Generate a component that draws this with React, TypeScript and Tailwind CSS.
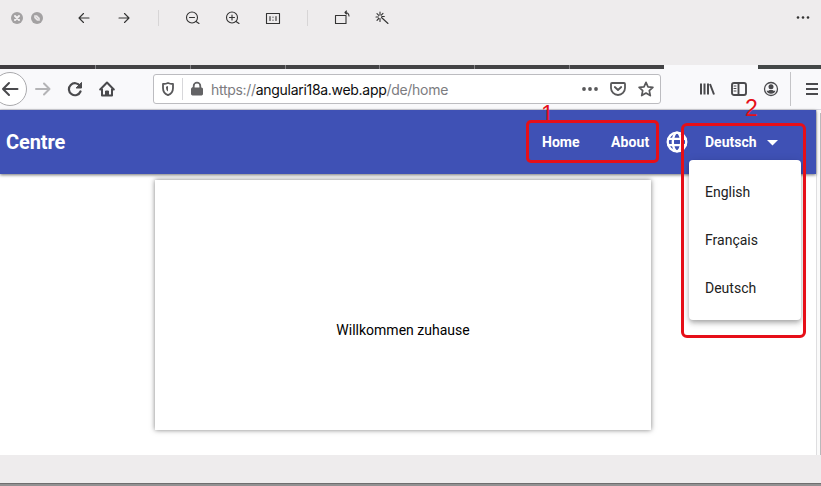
import type { ReactNode } from "react";

function Icon({ className = "", children, w = 16, h = 16, sw = 1.2 }: { className?: string; children: ReactNode; w?: number; h?: number; sw?: number }) {
  return (
    <svg width={w} height={h} viewBox={`0 0 ${w} ${h}`} fill="none" stroke="currentColor" strokeWidth={sw} strokeLinecap="round" strokeLinejoin="round" className={`block shrink-0 ${className}`}>
      {children}
    </svg>
  );
}

function ViewerBar() {
  return (
    <header className="h-[65px] bg-[#eeeced] text-[#333]">
      <div className="flex h-9 items-center pl-[11px] pr-[10px]">
        <Icon w={12} h={12} sw={2}>
          <circle cx="6" cy="6" r="6" fill="#a3a1a2" stroke="none" />
          <path d="M4 4l4 4M8 4l-4 4" stroke="#f2f0f1" />
        </Icon>
        <Icon w={12} h={12} className="ml-2">
          <circle cx="6" cy="6" r="6" fill="#a3a1a2" stroke="none" />
          <path d="M3.200 3.200h2.800L8.800 6v2.800H6L3.200 6z" fill="#e8e6e7" stroke="none" />
          <path d="M5 5l2 2" stroke="#c4c2c3" strokeWidth=".8" />
        </Icon>
        <Icon className="ml-[33px]" sw={1.1}><path d="M13 8H3M7.500 3.500L3 8l4.500 4.500" /></Icon>
        <Icon className="ml-6" sw={1.1}><path d="M3 8h10M8.500 3.500L13 8l-4.500 4.500" /></Icon>
        <div className="ml-[26px] h-4 w-px bg-[#d7d5d6]" />
        <Icon className="ml-[26px]" sw={1.1}><circle cx="7" cy="7.500" r="5.500" /><path d="M4.500 7.500h5M11 11.500L14 13.500" /></Icon>
        <Icon className="ml-6" sw={1.1}><circle cx="7" cy="7.500" r="5.500" /><path d="M4.500 7.500h5M7 5v5M11 11.500L14 13.500" /></Icon>
        <Icon className="ml-6" sw={1.1}><path d="M1.500 3.500h13v10h-13zM5 6.500v4M11 6.500v4M8 7v.3M8 10v.3" /></Icon>
        <div className="ml-[26px] h-4 w-px bg-[#d7d5d6]" />
        <Icon className="ml-[26px]" sw={1.1}><path d="M1.500 5.500h10.500v8H1.500zM11 2.500c2.500 0 3.800 1 4 3.500M12.500 1L11 2.500l1.500 1.500" /></Icon>
        <Icon className="ml-6" sw={1.1}><path d="M7.500 7.500l6.500 6M6 2v3M6 8.500v3M2 7h2.500M7.800 6.500h2.500M3 3.700l1.800 1.600M9 3.300L7.300 5.200M3 10.300L4.700 8.500" /></Icon>
        <Icon className="ml-auto"><g fill="currentColor" stroke="none"><circle cx="3" cy="7.500" r="1.300" /><circle cx="8" cy="7.500" r="1.300" /><circle cx="13" cy="7.500" r="1.300" /></g></Icon>
      </div>
    </header>
  );
}

function TabStrip() {
  return (
    <div className="flex h-1 bg-[#f9f9fb]">
      <div className="w-[95px] bg-[#3f3d40]" />
      {[0, 1, 2, 3, 4].map((n) => (
        <div key={n} className="w-[94.8px] border-l border-[#858487] bg-[#434345]" />
      ))}
      <div className="w-[95px] border-l border-[#858487] bg-[#434345]" />
      <div className="w-[94px]" />
      <div className="flex-1 bg-[#434747]" />
    </div>
  );
}

function BrowserBar() {
  return (
    <nav className="flex h-[41px] items-center overflow-hidden border-b border-[#d9d9df] bg-[#f9f9fb] text-[#4a4a4d]">
      <div className="-ml-[7px] flex size-[34px] shrink-0 items-center justify-center rounded-full border border-[#aaaaad] bg-white">
        <Icon w={18} sw={2}><path d="M16.500 8H2M8 2L2 8l6 6" /></Icon>
      </div>
      <Icon className="ml-2 text-[#b4b4b6]" sw={2}><path d="M1 8h13.500M9 2.500L14.500 8 9 13.500" /></Icon>
      <Icon className="ml-4" sw={2.200}><path d="M13.500 10.500A6 6 0 1 1 13 5" /><path d="M14.500 1.800v5.200H9.500z" fill="currentColor" strokeWidth="1" /></Icon>
      <Icon className="ml-4" sw={2}><path d="M1.200 8.500L8 1.500l6.800 7M3 8v6.500h10V8" /><path d="M6.500 14v-4h3v4z" fill="currentColor" strokeWidth="1" /></Icon>
      <div className="ml-[38px] flex h-[30px] w-[508px] shrink-0 items-center rounded-[3px] border border-[#bcbcc0] bg-white pl-[6px] pr-[6px]">
        <Icon sw={1.800} className="text-[#58585a]"><path d="M8 2c1.800.9 3.500 1 5 1v4c0 4-2 6-5 7.200C5 13 3 11 3 7V3c1.500 0 3.200-.1 5-1z" /><path d="M8 5v5.500C6.500 9.500 6 8 6 5.700z" fill="currentColor" stroke="none" /></Icon>
        <div className="ml-[6px] h-[22px] w-px bg-[#d7d7da]" />
        <Icon className="ml-[6px] text-[#636365]" sw={1.800}><path d="M4.700 7V5a3.300 3.300 0 0 1 6.600 0v2" /><rect x="2.500" y="7" width="11" height="7" rx=".8" fill="currentColor" strokeWidth="1" /></Icon>
        <div className="ml-[6px] whitespace-nowrap pt-[2px] font-['Inter',sans-serif] text-[14px] leading-5 tracking-[-0.3px] text-[#7c7c7f]">
          https://<span className="text-[#0c0c0d]">angulari18a.web.app</span>/de/home
        </div>
        <Icon className="ml-auto text-[#58585a]"><g fill="currentColor" stroke="none"><circle cx="2" cy="8" r="1.900" /><circle cx="8" cy="8" r="1.900" /><circle cx="14" cy="8" r="1.900" /></g></Icon>
        <Icon className="ml-3 text-[#58585a]" sw={1.800}><path d="M2 2h12q1 0 1 1v4a7 7 0 0 1-14 0V3q0-1 1-1zM4.800 6L8 9l3.200-3" /></Icon>
        <Icon className="ml-3 text-[#58585a]" sw={1.700}><path d="M8 1.300l2 4.500 4.900.5-3.600 3.400 1 4.900L8 12l-4.300 2.600 1-4.900L1.100 6.300 6 5.800z" /></Icon>
      </div>
      <Icon className="ml-[38px]" sw={2}><path d="M2 2.500v11M5.500 2.500v11M9 2.500v11M11 3l4 10.500" strokeLinecap="butt" /></Icon>
      <Icon className="ml-4" sw={1.900}><rect x="1" y="2" width="14" height="12" rx="2" /><path d="M7.500 2v12" /><path d="M3 5h2M3 7.500h2M3 10h2" strokeWidth="1" /></Icon>
      <Icon className="ml-4" sw={1.300}><circle cx="8" cy="8" r="6.500" /><circle cx="8" cy="5.800" r="2.500" fill="currentColor" stroke="none" /><path d="M3.500 9.800h2l1-.8h3l1 .8h2q-1 3-4.500 3t-4.500-3z" fill="currentColor" stroke="none" /></Icon>
      <div className="ml-[11px] h-[34px] w-px shrink-0 bg-[#c4c4c7]" />
      <Icon className="ml-[14px]" w={14} sw={2}><path d="M1 3h12M1 8h12M1 13h12" strokeLinecap="butt" /></Icon>
    </nav>
  );
}

function LanguageMenu() {
  return (
    <div className="absolute left-[689px] top-[50px] flex w-28 flex-col rounded bg-white py-2 text-[14px] text-[#212121] shadow-[0_2px_4px_-1px_rgba(0,0,0,.2),0_4px_5px_rgba(0,0,0,.14),0_1px_10px_rgba(0,0,0,.12)]">
      {["English", "Français", "Deutsch"].map((lang) => (
        <div key={lang} className="flex h-12 items-center px-4">{lang}</div>
      ))}
    </div>
  );
}

function WebPage() {
  return (
    <div className="relative flex h-[345px] bg-white font-['Roboto',sans-serif]">
      <main className="w-[816px]">
        <div className="relative flex h-16 items-center bg-[#3f51b5] text-white shadow-[0_1px_3px_rgba(0,0,0,.55)]">
          <div className="ml-[6px] w-[536px] text-[20px] font-bold tracking-[-0.1px]">Centre</div>
          <div className="w-[69px] text-[14px] font-bold">Home</div>
          <div className="w-[55px] text-[14px] font-bold tracking-[0.1px]">About</div>
          <Icon w={22} h={22} sw={2.300}>
            <circle cx="11" cy="11" r="9.300" />
            <ellipse cx="11" cy="11" rx="4.200" ry="9.300" />
            <path d="M2.500 7.800h17M2.500 14.200h17" />
          </Icon>
          <div className="ml-[17px] w-[62px] text-[14px] font-bold">Deutsch</div>
          <svg width="11" height="6" viewBox="0 0 11 6" className="mt-0.5"><path d="M0 0h11L5.500 5.500z" fill="white" /></svg>
        </div>
        <section className="ml-[155px] mt-[6px] flex h-[250px] w-[496px] items-center justify-center bg-white pt-[50px] text-[14px] text-black shadow-[0_0_5px_rgba(0,0,0,.5)]">
          <span>Willkommen zuhause</span>
        </section>
      </main>
      <aside className="flex w-[5px] justify-end border-l border-[#dedee0] bg-[#fafafa] pt-[3px]">
        <div className="w-px bg-[#b9b9bb]" />
      </aside>
      <LanguageMenu />
    </div>
  );
}

function Annotations() {
  return (
    <div className="pointer-events-none absolute inset-0 font-['Liberation_Sans',Arial,sans-serif] text-[23px] leading-none text-[#e60f18]">
      <div className="absolute left-[526px] top-[120px] h-[43px] w-[133px] rounded-[5px] border-3 border-current" />
      <div className="absolute left-[681px] top-[123px] h-[215px] w-[125px] rounded-[6px] border-3 border-current" />
      <span className="absolute left-[541px] top-[103px]">1</span>
      <span className="absolute left-[745px] top-[97px]">2</span>
    </div>
  );
}

export default function App() {
  return (
    <div className="relative h-[486px] w-[821px] overflow-hidden">
      <ViewerBar />
      <TabStrip />
      <BrowserBar />
      <WebPage />
      <footer className="h-7 bg-[#eeeced]" />
      <div className="h-[3px] border-t border-[#6f6e6f] bg-[#929192]" />
      <Annotations />
    </div>
  );
}
